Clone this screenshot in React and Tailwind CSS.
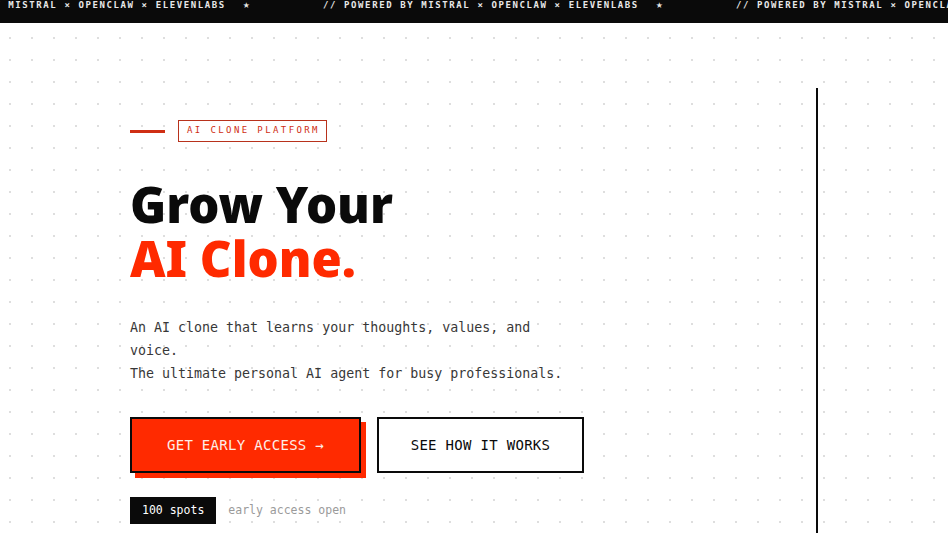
import React from "react";

const mono = { fontFamily: '"DejaVu Sans Mono", "Liberation Mono", monospace' };

function TickerItem() {
  return (
    <div className="flex shrink-0 items-start">
      <span className="w-[315px] shrink-0">// POWERED BY MISTRAL × OPENCLAW × ELEVENLABS</span>
      <span className="ml-[18px] mr-[72px] w-[8px] shrink-0 text-[11px] leading-[10px]">★</span>
    </div>
  );
}

export default function App() {
  return (
    <div className="h-[533px] w-full overflow-hidden bg-white">
      <div
        className="flex h-[23px] items-start overflow-hidden whitespace-nowrap bg-[#0a0a0a] text-[9px] font-bold uppercase leading-[10px] tracking-[1.6px] text-[#e8e8e8]"
        style={mono}
      >
        <div className="ml-[-90px] flex items-start">
          <TickerItem />
          <TickerItem />
          <TickerItem />
          <TickerItem />
        </div>
      </div>

      <div className="flex h-[510px] bg-[radial-gradient(circle,#dedede_1px,transparent_1.2px)] bg-[size:22px_22px] bg-[position:-1px_4px]">
        <div className="w-[816px] shrink-0 pl-[130px] pt-[97px]">
          <div className="flex items-center gap-[13px]">
            <div className="h-[3px] w-[35px] bg-[#cf2e14]" />
            <div
              className="flex h-[22px] items-center border border-[#b8321c] bg-white pl-[8px] pr-[6px] text-[9px] uppercase tracking-[2.4px] text-[#cf2e14]"
              style={mono}
            >
              AI CLONE PLATFORM
            </div>
          </div>

          <h1
            className="mt-[35px] text-[49px] font-black leading-[54px] tracking-[0px] text-[#0a0a0a]"
            style={{ fontFamily: '"Noto Sans", "Open Sans", sans-serif' }}
          >
            Grow Your
            <br />
            <span className="text-[#ff2a00]">AI Clone.</span>
          </h1>

          <p
            className="mt-[31px] max-w-[440px] text-[13.3px] leading-[23px] text-[#383838]"
            style={mono}
          >
            An AI clone that learns your thoughts, values, and voice.
            <br />
            The ultimate personal AI agent for busy professionals.
          </p>

          <div className="mt-[32px] flex gap-[16px]" style={mono}>
            <button className="flex h-[56px] w-[231px] items-center justify-center border-2 border-[#0a0a0a] bg-[#ff2a00] text-[14px] uppercase tracking-[0.3px] text-[#fdeee8] shadow-[5px_5px_0_#ff2a00]">
              GET EARLY ACCESS →
            </button>
            <button className="flex h-[56px] w-[207px] items-center justify-center border-2 border-[#0a0a0a] bg-white text-[14px] uppercase tracking-[0.3px] text-[#0a0a0a]">
              SEE HOW IT WORKS
            </button>
          </div>

          <div className="mt-[24px] flex items-center gap-[12px] text-[11.5px]" style={mono}>
            <span className="flex h-[27px] items-center bg-[#0a0a0a] px-[12px] text-white">100 spots</span>
            <span className="text-[#9a9a9a]">early access open</span>
          </div>
        </div>
        <div className="mt-[65px] h-[500px] flex-1 border-l-2 border-[#0a0a0a]" />
      </div>
    </div>
  );
}
